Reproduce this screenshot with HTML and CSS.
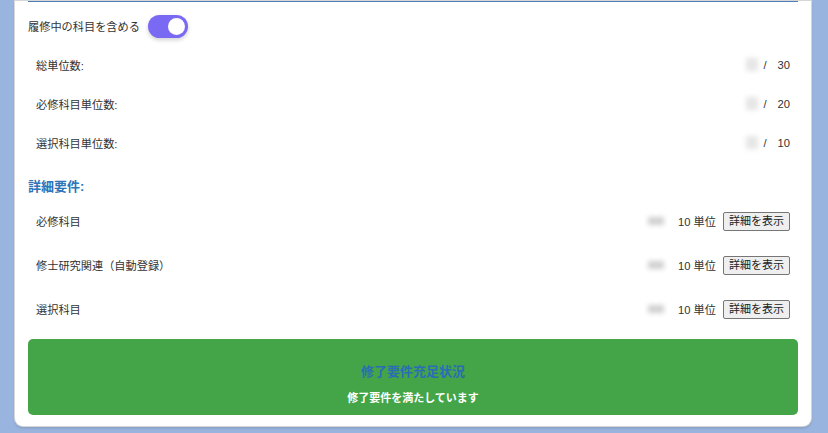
FILE: index.html
```html
<!DOCTYPE html>
<html lang="ja">
<head>
<meta charset="utf-8">
<link rel="stylesheet" href="styles.css">
</head>
<body>
<div class="card">
  <div class="divider"></div>
  <div class="toggle-row">
    <span>履修中の科目を含める</span>
    <span class="toggle"><span class="knob"></span></span>
  </div>
  <div class="summary">
    <div class="srow"><span>総単位数:</span><span class="val"><span class="blur-s"></span><span class="slash">/</span><span class="num">30</span></span></div>
    <div class="srow"><span>必修科目単位数:</span><span class="val"><span class="blur-s"></span><span class="slash">/</span><span class="num">20</span></span></div>
    <div class="srow"><span>選択科目単位数:</span><span class="val"><span class="blur-s"></span><span class="slash">/</span><span class="num">10</span></span></div>
  </div>
  <h3 class="heading">詳細要件:</h3>
  <div class="details">
    <div class="drow"><span>必修科目</span><span class="val"><span class="blur-d"></span><span class="units">10 単位</span><button class="btn">詳細を表示</button></span></div>
    <div class="drow"><span>修士研究関連（自動登録）</span><span class="val"><span class="blur-d"></span><span class="units">10 単位</span><button class="btn">詳細を表示</button></span></div>
    <div class="drow"><span>選択科目</span><span class="val"><span class="blur-d"></span><span class="units">10 単位</span><button class="btn">詳細を表示</button></span></div>
  </div>
  <div class="status">
    <div class="status-title">修了要件充足状況</div>
    <div class="status-sub">修了要件を満たしています</div>
  </div>
</div>
</body>
</html>
```
FILE: styles.css
```css
html, body {
  margin: 0;
  padding: 0;
}
body {
  background: #99b4de;
  font-family: "Liberation Sans", "Noto Sans CJK JP", sans-serif;
  font-size: 11.2px;
  color: #333;
  width: 828px;
  height: 433px;
  overflow: hidden;
}
.card {
  margin: 0 17px 0 15px;
  background: #fff;
  border-radius: 0 0 8px 8px;
  box-shadow: 0 0 0 1px #d6d6d6, 0 2px 3px rgba(0,0,0,0.15);
  padding: 0 13px 11px 13px;
}
.divider {
  height: 0;
  border-top: 1px solid #4a7fb8;
  margin-top: 1px;
}
.toggle-row {
  display: flex;
  align-items: center;
  gap: 8px;
  height: 22px;
  margin-top: 13px;
}
.toggle {
  width: 40px;
  height: 23px;
  border-radius: 12px;
  background: #7a69f2;
  display: flex;
  align-items: center;
  justify-content: flex-end;
  padding-right: 3px;
  box-sizing: border-box;
  box-shadow: 0 2px 4px rgba(0,0,0,0.18);
}
.knob {
  width: 17px;
  height: 17px;
  border-radius: 50%;
  background: #fff;
}
.summary {
  margin-top: 8px;
}
.srow, .drow {
  display: flex;
  align-items: center;
  justify-content: space-between;
  padding: 0 8px;
}
.srow {
  height: 39px;
}
.drow {
  height: 44px;
}
.val {
  display: flex;
  align-items: center;
}
.blur-s {
  display: inline-block;
  width: 12px;
  height: 13px;
  background: #e6e6e6;
  filter: blur(2.5px);
  margin-right: 6px;
}
.slash {
  width: 14px;
}
.heading {
  margin: 16px 0 0 0;
  font-size: 13px;
  line-height: 18px;
  font-weight: bold;
  color: #2f74b8;
}
.details {
  margin-top: 3px;
}
.blur-d {
  display: inline-block;
  width: 16px;
  height: 8px;
  background: #d0d0d0;
  filter: blur(2.5px);
  margin-right: 14px;
}
.units {
  margin-right: 7px;
}
.btn {
  font-family: "Liberation Sans", "Noto Sans CJK JP", sans-serif;
  font-size: 11px;
  line-height: 15px;
  color: #222;
  background: #efefef;
  border: 1px solid #767676;
  border-radius: 2px;
  padding: 1px 5px;
  margin: 0;
}
.status {
  margin-top: 8px;
  background: #43a547;
  border-radius: 5px;
  height: 76px;
  box-sizing: border-box;
  padding-top: 24px;
  text-align: center;
}
.status-title {
  font-size: 13px;
  line-height: 18px;
  font-weight: bold;
  color: #2b6db5;
}
.status-sub {
  margin-top: 9px;
  font-size: 11px;
  line-height: 16px;
  font-weight: bold;
  color: #fff;
}
```
